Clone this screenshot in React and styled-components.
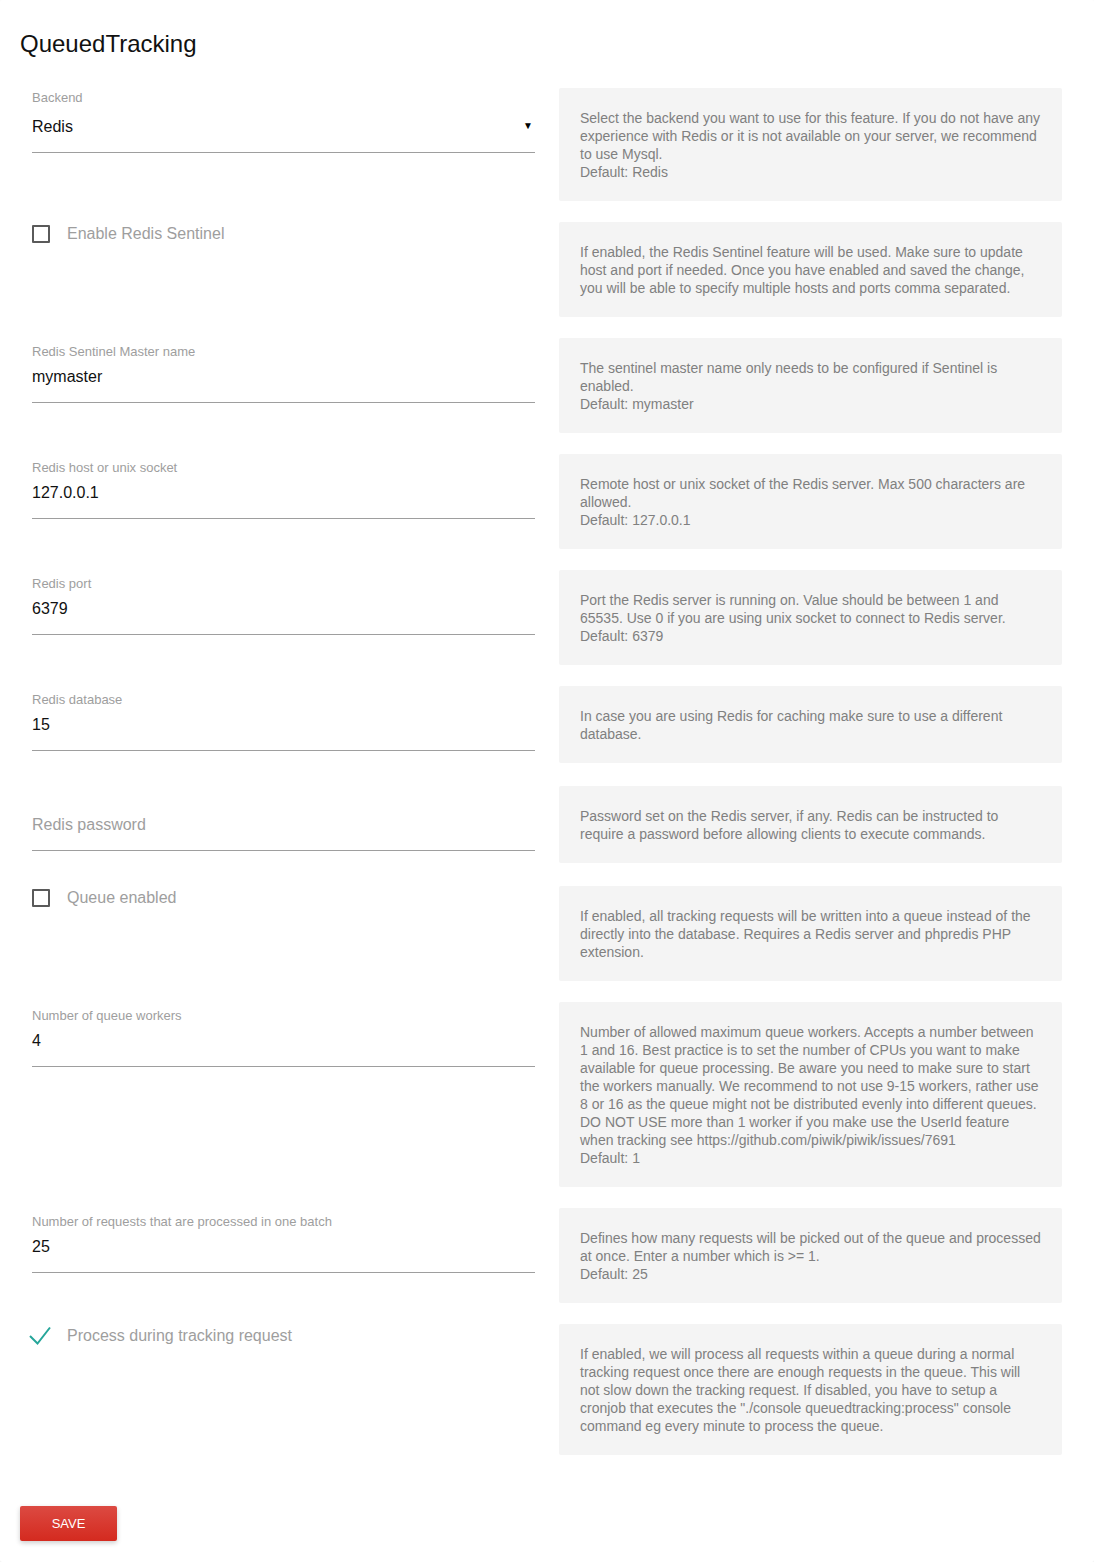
import React from "react";
import styled, { createGlobalStyle } from "styled-components";

const GlobalStyle = createGlobalStyle`
  html, body {
    margin: 0;
    padding: 0;
    background: #fff;
    font-family: "Liberation Sans", Arial, sans-serif;
  }
`;

const Card = styled.div`
  background: #fff;
  border-radius: 2px;
  box-shadow: 0 1px 3px rgba(0, 0, 0, 0.12);
  padding: 30px 20px 21px 20px;
  min-height: 1562px;
  box-sizing: border-box;
`;

const Title = styled.h2`
  margin: 0 0 30px 0;
  font-size: 24px;
  line-height: 28px;
  font-weight: 400;
  color: #111;
`;

const Rows = styled.div`
  padding: 0 12px;
`;

const Row = styled.div`
  display: grid;
  grid-template-columns: 1fr 1fr;
  column-gap: 24px;
  margin-bottom: 21px;
  align-items: start;
`;

const Field = styled.div`
  padding-top: ${(p) => (p.$select ? "2px" : "6px")};
  margin-bottom: 14px;
`;

const Label = styled.div`
  font-size: 13px;
  line-height: 16px;
  color: #9e9e9e;
`;

const Value = styled.div`
  position: relative;
  margin-top: ${(p) => (p.$empty ? "21px" : p.$select ? "9px" : "5px")};
  font-size: 16px;
  line-height: 24px;
  color: ${(p) => (p.$empty ? "#9e9e9e" : "#111")};
  padding-bottom: 13px;
  border-bottom: 1px solid #9e9e9e;
`;

const Caret = styled.span`
  position: absolute;
  right: 2px;
  top: 0;
  font-size: 10px;
  line-height: 22px;
  color: #000;
`;

const CheckRow = styled.label`
  display: flex;
  align-items: center;
  gap: 17px;
  height: 22px;
  margin-top: 1px;
  font-size: 16px;
  line-height: 22px;
  color: #9e9e9e;
`;

const Box = styled.span`
  box-sizing: border-box;
  width: 18px;
  height: 18px;
  border: 2px solid #5a5a5a;
  border-radius: 1px;
  flex: none;
`;

const Tick = styled.svg`
  width: 22px;
  height: 20px;
  margin-left: -3px;
  margin-right: -1px;
  flex: none;
  margin-top: 0;
`;

const Help = styled.div`
  background: #f4f4f4;
  border-radius: 2px;
  padding: 21px 18px 20px 21px;
  font-size: 14px;
  line-height: 18px;
  color: #808080;
`;

const HelpLine = styled.div`
  white-space: nowrap;
`;

const SaveButton = styled.button`
  margin-top: 30px;
  height: 35px;
  width: 97px;
  padding: 0;
  border: none;
  border-radius: 2px;
  background: linear-gradient(#dc4a42, #d42a1f);
  color: #fff;
  font-family: "Liberation Sans", Arial, sans-serif;
  font-size: 13px;
  box-shadow: 0 2px 5px rgba(0, 0, 0, 0.2);
  cursor: pointer;
`;

const settings = [
  {
    kind: "select",
    label: "Backend",
    value: "Redis",
    help: [
      "Select the backend you want to use for this feature. If you do not have any",
      "experience with Redis or it is not available on your server, we recommend",
      "to use Mysql.",
      "Default: Redis",
    ],
  },
  {
    kind: "check",
    label: "Enable Redis Sentinel",
    checked: false,
    help: [
      "If enabled, the Redis Sentinel feature will be used. Make sure to update",
      "host and port if needed. Once you have enabled and saved the change,",
      "you will be able to specify multiple hosts and ports comma separated.",
    ],
  },
  {
    kind: "text",
    label: "Redis Sentinel Master name",
    value: "mymaster",
    help: [
      "The sentinel master name only needs to be configured if Sentinel is",
      "enabled.",
      "Default: mymaster",
    ],
  },
  {
    kind: "text",
    label: "Redis host or unix socket",
    value: "127.0.0.1",
    help: [
      "Remote host or unix socket of the Redis server. Max 500 characters are",
      "allowed.",
      "Default: 127.0.0.1",
    ],
  },
  {
    kind: "text",
    label: "Redis port",
    value: "6379",
    help: [
      "Port the Redis server is running on. Value should be between 1 and",
      "65535. Use 0 if you are using unix socket to connect to Redis server.",
      "Default: 6379",
    ],
  },
  {
    kind: "text",
    label: "Redis database",
    value: "15",
    help: [
      "In case you are using Redis for caching make sure to use a different",
      "database.",
    ],
  },
  {
    kind: "text",
    label: "Redis password",
    value: "",
    help: [
      "Password set on the Redis server, if any. Redis can be instructed to",
      "require a password before allowing clients to execute commands.",
    ],
  },
  {
    kind: "check",
    label: "Queue enabled",
    checked: false,
    help: [
      "If enabled, all tracking requests will be written into a queue instead of the",
      "directly into the database. Requires a Redis server and phpredis PHP",
      "extension.",
    ],
  },
  {
    kind: "text",
    label: "Number of queue workers",
    value: "4",
    help: [
      "Number of allowed maximum queue workers. Accepts a number between",
      "1 and 16. Best practice is to set the number of CPUs you want to make",
      "available for queue processing. Be aware you need to make sure to start",
      "the workers manually. We recommend to not use 9-15 workers, rather use",
      "8 or 16 as the queue might not be distributed evenly into different queues.",
      "DO NOT USE more than 1 worker if you make use the UserId feature",
      "when tracking see https://github.com/piwik/piwik/issues/7691",
      "Default: 1",
    ],
  },
  {
    kind: "text",
    label: "Number of requests that are processed in one batch",
    value: "25",
    help: [
      "Defines how many requests will be picked out of the queue and processed",
      "at once. Enter a number which is >= 1.",
      "Default: 25",
    ],
  },
  {
    kind: "check",
    label: "Process during tracking request",
    checked: true,
    help: [
      "If enabled, we will process all requests within a queue during a normal",
      "tracking request once there are enough requests in the queue. This will",
      "not slow down the tracking request. If disabled, you have to setup a",
      "cronjob that executes the \"./console queuedtracking:process\" console",
      "command eg every minute to process the queue.",
    ],
  },
];

function Control({ item }) {
  if (item.kind === "check") {
    return (
      <CheckRow>
        {item.checked ? (
          <Tick viewBox="0 0 22 20">
            <polyline
              points="1,10 8.5,17.5 21,1.5"
              fill="none"
              stroke="#26a69a"
              strokeWidth="2"
            />
          </Tick>
        ) : (
          <Box />
        )}
        {item.label}
      </CheckRow>
    );
  }
  const empty = !item.value;
  const select = item.kind === "select";
  return (
    <Field $select={select}>
      {!empty && <Label>{item.label}</Label>}
      <Value $empty={empty} $select={select}>
        {empty ? item.label : item.value}
        {select && <Caret>▼</Caret>}
      </Value>
    </Field>
  );
}

export default function App() {
  return (
    <>
      <GlobalStyle />
      <Card>
        <Title>QueuedTracking</Title>
        <Rows>
          {settings.map((item) => (
            <Row key={item.label}>
              <Control item={item} />
              <Help>
                {item.help.map((line) => (
                  <HelpLine key={line}>{line}</HelpLine>
                ))}
              </Help>
            </Row>
          ))}
        </Rows>
        <SaveButton>SAVE</SaveButton>
      </Card>
    </>
  );
}
